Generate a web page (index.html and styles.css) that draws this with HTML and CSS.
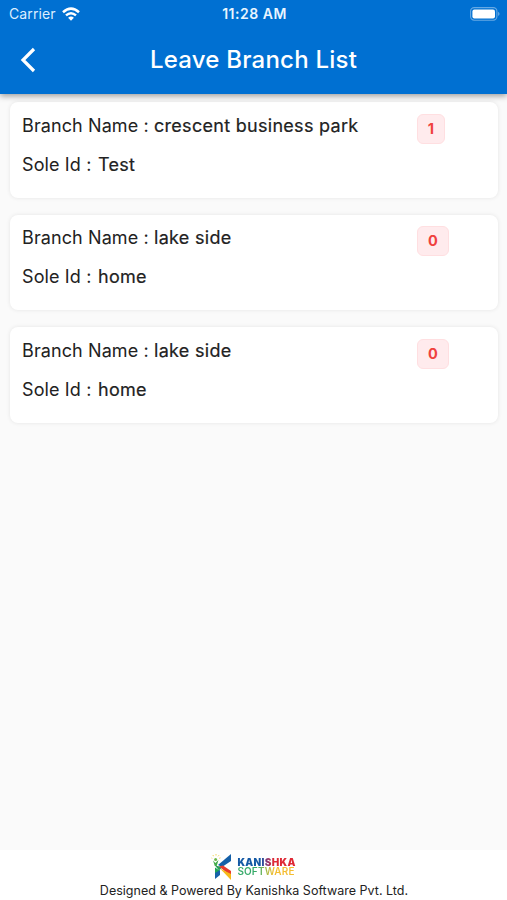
FILE: index.html
```html
<!DOCTYPE html>
<html lang="en">
<head>
<meta charset="utf-8">
<title>Leave Branch List</title>
<link rel="stylesheet" href="styles.css">
</head>
<body>
<div class="screen">
  <header class="app-header">
    <div class="status-bar">
      <div class="carrier"><span>Carrier</span>
        <svg class="wifi" viewBox="0 0 18 14" width="18" height="14" fill="none" stroke="#fff" stroke-width="2.5"><path d="M1 5.2Q9-2 17 5.2M4 8.4Q9 4 14 8.4"/><path d="M6.1 10.8Q9 8.3 11.9 10.8L9 13.8z" fill="#fff" stroke="none"/></svg>
      </div>
      <time class="clock">11:28 AM</time>
      <svg class="battery" viewBox="0 0 30 14" width="30" height="14"><rect x=".6" y=".6" width="26.3" height="12.6" rx="3.6" fill="none" stroke="#fff" stroke-opacity=".4" stroke-width="1.1"/><rect x="2.4" y="2.4" width="22.6" height="9" rx="2" fill="#fff"/><path d="M28.2 4.8Q30.8 6.9 28.2 9z" fill="#fff" opacity=".45"/></svg>
    </div>
    <div class="title-bar">
      <svg class="back" viewBox="0 0 16 26" width="16" height="26" fill="none" stroke="#fff" stroke-width="3.2"><path d="M14 2 3 13 14 24"/></svg>
      <h1>Leave Branch List</h1>
    </div>
  </header>
  <main class="list">
    <article class="card">
      <div class="details">
        <p><span class="label name">Branch Name :</span><span class="value">crescent business park</span></p>
        <p><span class="label sole">Sole Id :</span><span class="value">Test</span></p>
      </div>
      <span class="badge one">1</span>
    </article>
    <article class="card">
      <div class="details">
        <p><span class="label name">Branch Name :</span><span class="value">lake side</span></p>
        <p><span class="label sole">Sole Id :</span><span class="value">home</span></p>
      </div>
      <span class="badge">0</span>
    </article>
    <article class="card">
      <div class="details">
        <p><span class="label name">Branch Name :</span><span class="value">lake side</span></p>
        <p><span class="label sole">Sole Id :</span><span class="value">home</span></p>
      </div>
      <span class="badge">0</span>
    </article>
  </main>
  <footer class="footer">
    <div class="brand">
      <svg viewBox="0 0 22 28" width="22" height="28">
        <path d="M20 1v7L11 14 7 12z" fill="#1560a8"/>
        <path d="M4 12.5 11.5 14 8 17.5z" fill="#28a15a"/>
        <path d="M8 13.5 12 12.5 20 18v5z" fill="#e83b2d"/>
        <path d="M9 15.5 20 21v6z" fill="#f6b918"/>
        <path d="M4 14.5 9 17.8 4 25z" fill="#20a557"/>
        <path d="M4 20 9 17v5l-5 4z" fill="#1761a9"/>
        <path d="M2 7.5 4.3 10 7.5 7 5.7 13H3.8z" fill="#43ac4b"/>
        <circle cx="4.6" cy="6.5" r="1.5" fill="#70b74b"/>
        <path d="M1 5.5.2 4.6M2.4 3.2 2 2M5 2.5V1M7 3.3 8 2.2M8.2 5.3 9.5 4.8" stroke="#f4cf45" stroke-width=".9"/>
      </svg>
      <div class="wordmark"><span class="kanishka">KANISHKA</span><span class="software">SOFTWARE</span></div>
    </div>
    <p class="credit">Designed &amp; Powered By Kanishka Software Pvt. Ltd.</p>
  </footer>
</div>
</body>
</html>
```
FILE: styles.css
```css
* { box-sizing: border-box; }
body { margin: 0; font-family: Inter, "Liberation Sans", sans-serif; color: #222; background: #fafafa; }
h1, p { margin: 0; }
svg { display: block; flex: none; }
.screen { width: 507px; height: 900px; display: flex; flex-direction: column; overflow: hidden; }
.app-header { height: 94px; flex: none; background: #0070d2; color: #fff; box-shadow: 0 2px 6px rgba(0,0,0,.38); z-index: 1; }
.status-bar { height: 27px; padding: 0 7px 0 9px; display: grid; grid-template-columns: 1fr auto 1fr; align-items: center; }
.carrier { display: flex; align-items: center; gap: 6px; font-size: 14px; letter-spacing: .1px; color: #dceeff; }
.clock { font-size: 14px; font-weight: 600; letter-spacing: .5px; color: #e8f5ff; }
.battery { justify-self: end; }
.title-bar { height: 66px; display: grid; grid-template-columns: 60px 1fr 60px; align-items: center; }
.back { margin-left: 20px; }
h1 { text-align: center; font-size: 24px; line-height: 30px; font-weight: 500; letter-spacing: .22px; white-space: nowrap; }
.list { flex: 1; padding: 8px 9px 0 10px; display: flex; flex-direction: column; gap: 17px; }
.card { height: 95.5px; flex: none; display: flex; align-items: flex-start; padding: 11.9px 12px; background: #fff; border-radius: 8px; box-shadow: 0 0 4px rgba(0,0,0,.09); }
.details { width: 395px; display: flex; flex-direction: column; gap: 15px; }
.details p { display: flex; font-size: 18px; line-height: 24px; white-space: nowrap; }
.label.name { width: 132px; letter-spacing: .1px; }
.label.sole { width: 76px; letter-spacing: .12px; }
.value { letter-spacing: .29px; -webkit-text-stroke: .2px currentColor; }
.badge { width: 32px; height: 30px; border: 1px solid #ffdfe1; border-radius: 6px; background: #ffebed; color: #f0413e; font-size: 14.5px; line-height: 28px; font-weight: 700; text-align: center; }
.badge.one { width: 28px; }
.footer { height: 50px; flex: none; background: #fff; display: flex; flex-direction: column; align-items: center; }
.brand { height: 32px; padding-top: 3px; display: flex; gap: 4px; }
.wordmark { padding-top: 5px; display: flex; flex-direction: column; font-size: 10px; line-height: 9px; }
.kanishka, .software { height: 9px; color: transparent; background-clip: text; -webkit-background-clip: text; }
.kanishka { font-weight: 900; letter-spacing: .3px; background-image: linear-gradient(90deg, #1459a5 42%, #713b83 48%, #df2935 62%); }
.software { font-weight: 600; letter-spacing: .15px; background-image: linear-gradient(90deg, #35a968 35%, #a3bb48 50%, #f5bd30 62%); }
.credit { padding-left: 1px; font-size: 12.5px; line-height: 18px; white-space: nowrap; letter-spacing: .02px; }
```
